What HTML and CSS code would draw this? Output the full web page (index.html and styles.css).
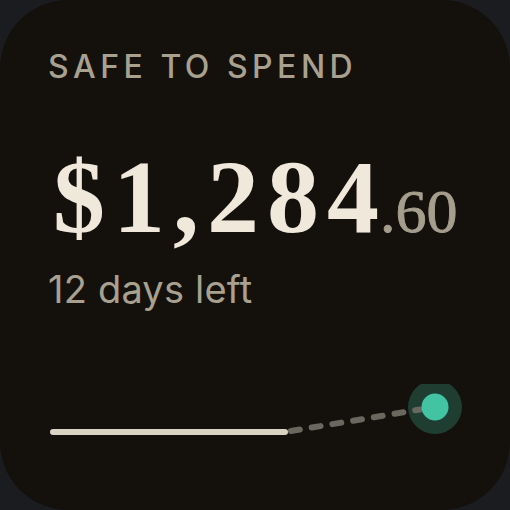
FILE: index.html
```html
<!DOCTYPE html>
<html>
<head>
<meta charset="utf-8">
<link rel="stylesheet" href="styles.css">
</head>
<body>
<div class="card">
  <div class="label">SAFE TO SPEND</div>
  <div class="amount"><span class="whole">$1,284</span><span class="cents">.60</span></div>
  <div class="sub">12 days left</div>
  <svg class="track" width="416" height="56" viewBox="0 0 416 56">
    <line x1="5" y1="48" x2="237" y2="48" stroke="#d9d3c4" stroke-width="6" stroke-linecap="round"/>
    <circle cx="387" cy="23" r="27" fill="#1f3d31"/>
    <line x1="239" y1="47.7" x2="372" y2="25.5" stroke="#6a675f" stroke-width="6" stroke-linecap="round" stroke-dasharray="9 12" stroke-dashoffset="-4"/>
    <circle cx="387" cy="23" r="13.5" fill="#42c4a3"/>
  </svg>
</div>
</body>
</html>
```

FILE: styles.css
```css
html, body {
  margin: 0;
  padding: 0;
  background: #1b1c20;
}
.card {
  width: 510px;
  height: 510px;
  box-sizing: border-box;
  background: #14110d;
  border-radius: 68px;
  padding: 51px 0 0 48px;
  display: flex;
  flex-direction: column;
  align-items: flex-start;
}
.label {
  font-family: Inter, "Liberation Sans", sans-serif;
  font-size: 32px;
  line-height: 32px;
  font-weight: 500;
  letter-spacing: 4.5px;
  color: #a9a18f;
}
.amount {
  margin-top: 62px;
  display: flex;
  align-items: baseline;
  font-family: "Liberation Serif", serif;
  white-space: nowrap;
}
.whole {
  font-size: 104px;
  line-height: 104px;
  font-weight: 700;
  letter-spacing: 8px;
  color: #efe8db;
  margin-left: 5px;
  margin-right: -7px;
}
.cents {
  font-size: 62px;
  line-height: 62px;
  font-weight: 400;
  -webkit-text-stroke: 0.9px #a59e8d;
  color: #a59e8d;
}
.sub {
  margin-top: 22px;
  font-family: Inter, "Liberation Sans", sans-serif;
  font-size: 38px;
  line-height: 36px;
  letter-spacing: 0.2px;
  color: #a9a18f;
}
.track {
  display: block;
  margin-top: 77px;
  overflow: hidden;
}
```
